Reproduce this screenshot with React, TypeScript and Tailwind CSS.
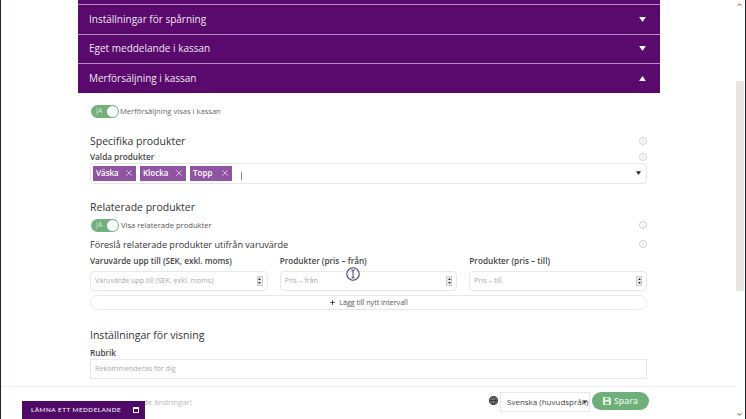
import { Plus, X } from 'lucide-react';

const SECTIONS = [
  { title: 'Inställningar för spårning', open: false },
  { title: 'Eget meddelande i kassan', open: false },
  { title: 'Merförsäljning i kassan', open: true },
];

const TAGS = [
  { label: 'Väska', width: 'w-[43px]' },
  { label: 'Klocka', width: 'w-[46px]' },
  { label: 'Topp', width: 'w-[42px]' },
];

const RANGES = [
  { label: 'Varuvärde upp till (SEK, exkl. moms)', placeholder: 'Varuvärde upp till (SEK, exkl. moms)' },
  { label: 'Produkter (pris – från)', placeholder: 'Pris – från' },
  { label: 'Produkter (pris – till)', placeholder: 'Pris – till' },
];

function Caret({ up, className }: { up?: boolean; className: string }) {
  return (
    <svg viewBox="0 0 8 6" className={className} fill="currentColor">
      <path d={up ? 'M4 0 8 6H0Z' : 'M0 0H8L4 6Z'} />
    </svg>
  );
}

function Info() {
  return (
    <svg viewBox="0 0 10 10" className="w-[8px] h-[8px] text-[#b5b5b5]" fill="none" stroke="currentColor" strokeWidth="0.8">
      <circle cx="5" cy="5" r="4.4" />
      <path d="M5 4.3V7.4M5 2.6V3.4" />
    </svg>
  );
}

function Toggle() {
  return (
    <div className="w-[28px] h-[13px] ml-[1px] rounded-full bg-[#73b07d] flex items-center justify-between pl-[5px] pr-[1px] shrink-0">
      <span className="text-[7px] text-[#d5ead8]">JA</span>
      <span className="w-[11px] h-[11px] rounded-full bg-white" />
    </div>
  );
}

function Spinner() {
  return (
    <div className="w-[6px] h-[10px] border border-[#ccc] bg-[#eee] flex flex-col items-center justify-around">
      <Caret up className="w-[3px] h-[2px] text-[#222]" />
      <Caret className="w-[3px] h-[2px] text-[#222]" />
    </div>
  );
}

export default function App() {
  return (
    <div className="relative h-[419px] w-[746px] overflow-hidden bg-white font-['Open_Sans',sans-serif] border-l border-r border-[#1c2433] flex">
      <main className="flex-1 min-w-0 pl-[77px]">
        <div className="w-[582px]">
          <div className="h-[4px] bg-[#5a0a6e]" />
          {SECTIONS.map(s => (
            <div
              key={s.title}
              className="h-[29.6px] bg-[#590a6c] border-t border-[#b48cc0] flex items-center justify-between pl-[11px] pr-[14px]"
            >
              <span className="text-[10px] text-[#f1e6f4]">{s.title}</span>
              <Caret up={s.open} className="w-[7px] h-[5px] text-white" />
            </div>
          ))}

          <div className="pl-[12px] pr-[13px]">
            <div className="flex items-center gap-[1px] mt-[12px]">
              <Toggle />
              <span className="text-[7.6px] text-[#666]">Merförsäljning visas i kassan</span>
            </div>

            <div className="flex items-center justify-between mt-[15px]">
              <h2 className="text-[10.5px] leading-[16px] text-[#333]">Specifika produkter</h2>
              <Info />
            </div>
            <div className="flex items-center justify-between mt-[1px]">
              <span className="text-[8.2px] leading-[14px] font-semibold text-[#444]">Valda produkter</span>
              <Info />
            </div>
            <div className="relative h-[21px] mt-[-1px] border border-[#e6e6e6] rounded-sm flex items-center gap-[4px] pl-[2px]">
              {TAGS.map(t => (
                <span
                  key={t.label}
                  className={`${t.width} h-[15px] bg-[#8f55a1] flex items-center justify-between pl-[3px] pr-[2px] text-[8px] font-semibold text-white`}
                >
                  {t.label}
                  <X className="w-[10px] h-[10px]" strokeWidth={1.4} />
                </span>
              ))}
              <span className="w-[1px] h-[8px] bg-[#888] ml-[5px] mt-[6px]" />
              <Caret className="absolute right-[5px] top-[7px] w-[5px] h-[4px] text-[#33203a]" />
            </div>

            <div className="flex items-center mt-[15px]">
              <h2 className="text-[10.5px] leading-[16px] text-[#333]">Relaterade produkter</h2>
            </div>
            <div className="flex items-center justify-between mt-[4px]">
              <div className="flex items-center gap-[2px]">
                <Toggle />
                <span className="text-[7.6px] text-[#555]">Visa relaterade produkter</span>
              </div>
              <Info />
            </div>
            <div className="flex items-center justify-between mt-[5px]">
              <span className="text-[9.1px] leading-[15px] text-[#333]">Föreslå relaterade produkter utifrån varuvärde</span>
              <Info />
            </div>

            <div className="grid grid-cols-3 gap-x-[12px] mt-[1px]">
              {RANGES.map(r => (
                <div key={r.label}>
                  <div className="text-[8.2px] leading-[16px] font-semibold text-[#444]">{r.label}</div>
                  <div className="h-[20px] mt-[2px] border border-[#e8e8e8] rounded-sm flex items-center justify-between pl-[4px] pr-[4px]">
                    <span className="text-[7.1px] text-[#aaa]">{r.placeholder}</span>
                    <Spinner />
                  </div>
                </div>
              ))}
            </div>

            <div className="h-[15px] mt-[4px] border border-[#e8e8e8] rounded-full flex items-center justify-center gap-[3px]">
              <Plus className="w-[7px] h-[7px] text-[#333]" strokeWidth={3} />
              <span className="text-[7.1px] text-[#555]">Lägg till nytt intervall</span>
            </div>

            <h2 className="text-[10.5px] leading-[16px] text-[#333] mt-[17px]">Inställningar för visning</h2>
            <div className="text-[8.2px] leading-[14px] font-semibold text-[#444] mt-[3px]">Rubrik</div>
            <div className="h-[20px] mt-[-1px] border border-[#e8e8e8] flex items-center pl-[4px]">
              <span className="text-[7.2px] text-[#aaa]">Rekommenderas för dig</span>
            </div>
          </div>
        </div>
      </main>

      {/* Scrollbar */}
      <div className="w-[9px] mr-[1px] shrink-0 flex flex-col items-center justify-between py-[3px]">
        <svg viewBox="0 0 6 4" className="w-[5px] h-[3px] text-[#444]" fill="none" stroke="currentColor" strokeWidth="1.2"><path d="M.5 3.5 3 1l2.5 2.5" /></svg>
      </div>
      <div className="absolute right-[1px] top-[81px] h-[210px] w-[8px] bg-[#e6e6e6]" />

      {/* Footer */}
      <div className="absolute left-0 right-[10px] bottom-0 h-[33px] bg-white border-t border-[#eeeeee] flex items-start justify-end pr-[86px]">
        <span className="absolute left-[142px] top-[10px] text-[7.8px] text-[#bbb]">de ändringar!</span>
        <div className="flex items-center mt-[5px] text-[#333]">
          <svg viewBox="0 0 10 10" className="w-[9px] h-[9px] mr-[2px] -mt-[4px] text-[#333]" fill="none" stroke="currentColor" strokeWidth="1">
            <circle cx="5" cy="5" r="4.5" fill="#777" />
            <path d="M.5 5h9M5 .5c-3 3-3 6 0 9M5 .5c3 3 3 6 0 9" stroke="#222" strokeWidth="0.7" />
          </svg>
          <div className="relative w-[90px] h-[20px] border border-[#e8e8e8] flex items-center pl-[6px] text-[8px] text-[#444] whitespace-nowrap overflow-hidden">
            Svenska (huvudspråk)
            <Caret className="absolute right-[2px] top-[7px] w-[4px] h-[4px] text-[#33203a]" />
          </div>
          <div className="w-[57px] h-[18px] ml-[2px] -mt-[2px] rounded-full bg-[#6fb07a] flex items-center justify-center gap-[3px] text-[8.6px] font-semibold text-[#e2f2e4]">
            <svg viewBox="0 0 10 10" className="w-[8px] h-[8px]" fill="currentColor">
              <path d="M0 1a1 1 0 0 1 1-1h7l2 2v7a1 1 0 0 1-1 1H1a1 1 0 0 1-1-1ZM2.500 1v2.500h4.500V1ZM2.500 6v3h5V6Z" fillRule="evenodd" />
            </svg>
            Spara
          </div>
        </div>
      </div>

      {/* Down arrow in scrollbar */}
      <svg viewBox="0 0 6 4" className="absolute right-[3px] bottom-[3px] w-[5px] h-[3px] text-[#444]" fill="none" stroke="currentColor" strokeWidth="1.2"><path d="M.5.5 3 3 5.500.5" /></svg>

      {/* Feedback tab */}
      <div className="absolute left-[21px] bottom-0 w-[123px] h-[18px] bg-[#4f0a68] flex items-center justify-between pl-[9px] pr-[6px]">
        <span className="text-[6.3px] font-['Lato',sans-serif] font-semibold tracking-[0.08em] text-[#f0e6f4]">LÄMNA ETT MEDDELANDE</span>
        <span className="w-[6px] h-[6px] border border-white border-t-2" />
      </div>

      {/* Screen-recording cursor */}
      <svg viewBox="0 0 16 16" className="absolute left-[344px] top-[266px] w-[16px] h-[16px] text-[#3a3a8c]" fill="none" stroke="currentColor">
        <circle cx="8" cy="8" r="6.2" strokeWidth="1.1" />
        <path d="M6.400 4.200h3.200M8 4.200v7.600M6.400 11.800h3.200" stroke="#333" strokeWidth="0.9" />
      </svg>
    </div>
  );
}
